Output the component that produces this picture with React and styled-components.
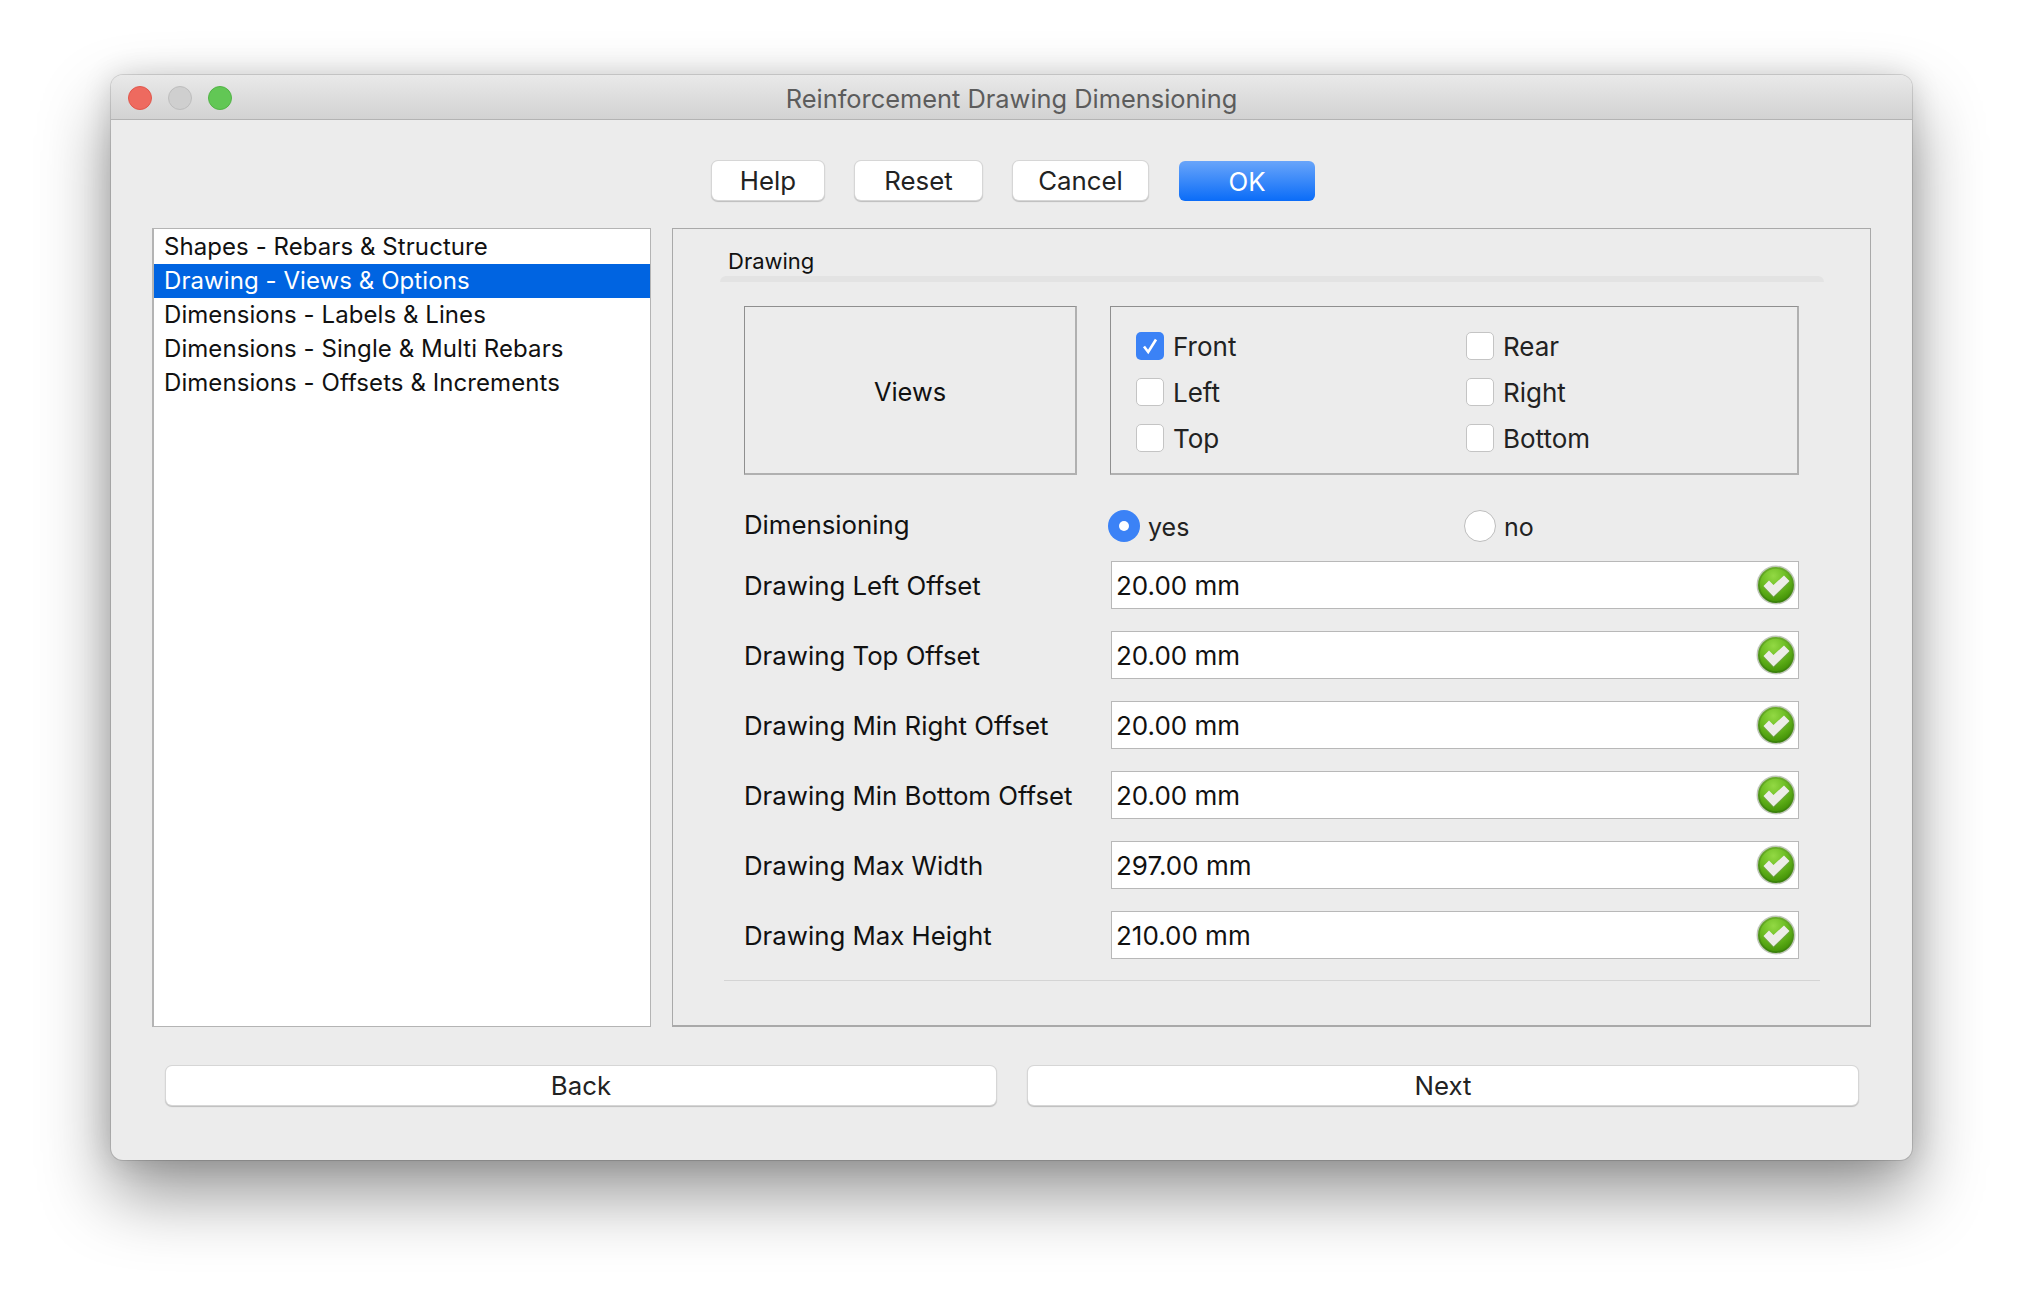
import React from 'react';
import styled, { createGlobalStyle } from 'styled-components';

const GlobalStyle = createGlobalStyle`
  html, body {
    margin: 0;
    background: #ffffff;
  }
  body {
    font-family: Inter, "Liberation Sans", sans-serif;
    color: #111111;
  }
`;

const CATEGORIES = [
  'Shapes - Rebars & Structure',
  'Drawing - Views & Options',
  'Dimensions - Labels & Lines',
  'Dimensions - Single & Multi Rebars',
  'Dimensions - Offsets & Increments',
];

const VIEWS = [
  { label: 'Front', checked: true },
  { label: 'Rear' },
  { label: 'Left' },
  { label: 'Right' },
  { label: 'Top' },
  { label: 'Bottom' },
];

const FIELDS = [
  { label: 'Drawing Left Offset', value: '20.00 mm' },
  { label: 'Drawing Top Offset', value: '20.00 mm' },
  { label: 'Drawing Min Right Offset', value: '20.00 mm' },
  { label: 'Drawing Min Bottom Offset', value: '20.00 mm' },
  { label: 'Drawing Max Width', value: '297.00 mm' },
  { label: 'Drawing Max Height', value: '210.00 mm' },
];

const ValidIcon = ({ id }) => (
  <svg width="40" height="40" viewBox="0 0 40 40">
    <defs>
      <linearGradient id={`ring-${id}`} x1="0" y1="0" x2="0" y2="1">
        <stop offset="0" stopColor="#6aad2a" />
        <stop offset="1" stopColor="#387f0a" />
      </linearGradient>
      <radialGradient id={`ball-${id}`} cx="0.42" cy="0.22" r="0.85">
        <stop offset="0" stopColor="#93d944" />
        <stop offset="0.5" stopColor="#69ba20" />
        <stop offset="1" stopColor="#3f8e04" />
      </radialGradient>
    </defs>
    <circle cx="20" cy="20" r="19.5" fill="#aab3a2" opacity="0.75" />
    <circle cx="20" cy="20" r="18" fill={`url(#ring-${id})`} />
    <circle cx="20" cy="20" r="16.2" fill={`url(#ball-${id})`} />
    <path d="M7.5 21 L13 15.5 L17.5 20 L28 10.5 L33.5 16 L17.5 31.5 Z" fill="#7f8f74" opacity="0.4" transform="translate(0 1.5)" />
    <path d="M7.5 21 L13 15.5 L17.5 20 L28 10.5 L33.5 16 L17.5 31.5 Z" fill="#ecece8" />
  </svg>
);

const App = () => {
  return (
    <>
      <GlobalStyle />
      <Page>
        <Window>
          <TitleBar>
            <Lights>
              <Light $color="#ee6a5f" $edge="#e0574c" />
              <Light $color="#cfcfcf" $edge="#bdbdbd" />
              <Light $color="#62c755" $edge="#52b346" />
            </Lights>
            <Title>Reinforcement Drawing Dimensioning</Title>
          </TitleBar>
          <Body>
            <TopButtons>
              <PushButton $width={112}>Help</PushButton>
              <PushButton $width={127}>Reset</PushButton>
              <PushButton $width={135}>Cancel</PushButton>
              <DefaultButton>OK</DefaultButton>
            </TopButtons>
            <Main>
              <CategoryList>
                {CATEGORIES.map((name, i) => (
                  <CategoryItem key={name} $selected={i === 1}>{name}</CategoryItem>
                ))}
              </CategoryList>
              <Panel>
                <GroupTitle>Drawing</GroupTitle>
                <Groove />
                <GroupBody>
                  <ViewsRow>
                    <FrameBox $center>Views</FrameBox>
                    <FrameBox>
                      <CheckGrid>
                        {VIEWS.map((view) => (
                          <CheckRow key={view.label}>
                            <CheckBox $checked={view.checked}>
                              {view.checked && (
                                <svg width="28" height="28" viewBox="0 0 28 28">
                                  <path d="M8 14.5 L12.2 20 L20 7.5" fill="none" stroke="#ffffff" strokeWidth="2.6" />
                                </svg>
                              )}
                            </CheckBox>
                            {view.label}
                          </CheckRow>
                        ))}
                      </CheckGrid>
                    </FrameBox>
                  </ViewsRow>
                  <RadioRow>
                    <RadioLabel>Dimensioning</RadioLabel>
                    <RadioGroup>
                      <RadioItem><Radio $on /><RadioText>yes</RadioText></RadioItem>
                      <RadioItem><Radio /><RadioText>no</RadioText></RadioItem>
                    </RadioGroup>
                  </RadioRow>
                  <Fields>
                    {FIELDS.map((field, i) => (
                      <FieldRow key={field.label}>
                        <FieldLabel>{field.label}</FieldLabel>
                        <FieldInput>
                          {field.value}
                          <ValidIcon id={i} />
                        </FieldInput>
                      </FieldRow>
                    ))}
                  </Fields>
                </GroupBody>
                <BottomLine />
              </Panel>
            </Main>
            <BottomButtons>
              <PushButton>Back</PushButton>
              <PushButton>Next</PushButton>
            </BottomButtons>
          </Body>
        </Window>
      </Page>
    </>
  );
};

const Page = styled.div`
  width: 2024px;
  height: 1308px;
  padding: 75px 0 0 111px;
  box-sizing: border-box;
  overflow: hidden;
`;
const Window = styled.div`
  width: 1801px;
  height: 1085px;
  background: #ececec;
  border-radius: 12px;
  box-shadow: 0 0 0 1px rgba(0, 0, 0, 0.12), 0 34px 70px rgba(0, 0, 0, 0.42), 0 0 30px rgba(0, 0, 0, 0.14);
  overflow: hidden;
`;
const TitleBar = styled.div`
  height: 45px;
  box-sizing: border-box;
  display: flex;
  align-items: center;
  position: relative;
  background: linear-gradient(#e9e9e9, #d2d2d2);
  border-bottom: 1px solid #b3b3b3;
`;
const Lights = styled.div`
  position: absolute;
  left: 17px;
  top: 11px;
  display: flex;
  gap: 16px;
`;
const Light = styled.span`
  width: 24px;
  height: 24px;
  border-radius: 50%;
  box-sizing: border-box;
  background: ${(p) => p.$color};
  border: 1px solid ${(p) => p.$edge};
`;
const Title = styled.div`
  flex: 1;
  text-align: center;
  font-size: 25.4px;
  color: #5c5c5c;
  padding-top: 2px;
`;
const Body = styled.div`
  display: flex;
  flex-direction: column;
`;
const TopButtons = styled.div`
  display: flex;
  justify-content: center;
  gap: 31px;
  padding: 41px 0 27px 4px;
`;
const PushButton = styled.div`
  flex: ${(p) => (p.$width ? `0 0 ${p.$width}px` : '1')};
  height: 39px;
  box-sizing: border-box;
  display: flex;
  align-items: center;
  justify-content: center;
  background: #ffffff;
  border-radius: 6px;
  box-shadow: 0 0 0 1px #d6d6d6, 0 1px 1px 1px rgba(0, 0, 0, 0.2);
  font-size: 25.8px;
  color: #222222;
`;
const DefaultButton = styled.div`
  width: 136px;
  height: 40px;
  display: flex;
  align-items: center;
  justify-content: center;
  border-radius: 6px;
  background: linear-gradient(#69a5fa, #0a6cf8);
  font-size: 25.8px;
  color: #ffffff;
`;
const Main = styled.div`
  display: flex;
  gap: 21px;
  padding: 0 43px 0 41px;
`;
const CategoryList = styled.div`
  flex: 0 0 499px;
  height: 799px;
  box-sizing: border-box;
  padding-top: 1px;
  background: #ffffff;
  border: 1px solid #b4b4b4;
  border-left-width: 2px;
  border-top-width: 1.5px;
`;
const CategoryItem = styled.div`
  height: 34px;
  line-height: 34px;
  padding-left: 10px;
  font-size: 24px;
  letter-spacing: 0.07px;
  background: ${(p) => (p.$selected ? '#0064e1' : 'transparent')};
  color: ${(p) => (p.$selected ? '#ffffff' : '#111111')};
`;
const Panel = styled.div`
  flex: 1;
  height: 799px;
  box-sizing: border-box;
  border: 1.5px solid #a9a9a9;
  border-bottom-width: 2px;
  padding: 17px 46px 0 47px;
`;
const GroupTitle = styled.div`
  padding-left: 8px;
  height: 30px;
  line-height: 30px;
  font-size: 22px;
`;
const Groove = styled.div`
  height: 6px;
  background: #e3e3e3;
  border-radius: 6px 6px 0 0;
`;
const GroupBody = styled.div`
  padding: 24px 25px 0 24px;
`;
const ViewsRow = styled.div`
  display: grid;
  grid-template-columns: 333px 689px;
  gap: 33px;
`;
const FrameBox = styled.div`
  height: 169px;
  box-sizing: border-box;
  border: 1px solid #8f8f8f;
  border-right: 2px solid #b0b0b0;
  border-bottom: 2px solid #b0b0b0;
  font-size: 25.4px;
  ${(p) => p.$center && 'display: flex; align-items: center; justify-content: center; padding-top: 2px;'}
`;
const CheckGrid = styled.div`
  display: grid;
  grid-template-columns: 330px 1fr;
  grid-auto-rows: 28px;
  row-gap: 18px;
  padding: 25px 0 0 25px;
`;
const CheckRow = styled.div`
  display: flex;
  align-items: center;
  gap: 9px;
  font-size: 26px;
  color: #222222;
`;
const CheckBox = styled.span`
  width: 28px;
  height: 28px;
  box-sizing: border-box;
  border-radius: 5px;
  display: block;
  background: ${(p) => (p.$checked ? '#3b82f6' : '#ffffff')};
  border: ${(p) => (p.$checked ? 'none' : '1px solid #c4c4c4')};
`;
const RadioRow = styled.div`
  display: grid;
  grid-template-columns: 364px 1fr;
  align-items: center;
  height: 32px;
  margin-top: 34px;
`;
const RadioGroup = styled.div`
  display: grid;
  grid-template-columns: 356px 1fr;
`;
const RadioItem = styled.div`
  display: flex;
  align-items: center;
  gap: 8px;
`;
const RadioText = styled.span`
  margin-top: 2px;
  font-size: 25px;
  color: #222222;
`;
const Radio = styled.span`
  width: 32px;
  height: 32px;
  box-sizing: border-box;
  border-radius: 50%;
  flex: none;
  display: flex;
  align-items: center;
  justify-content: center;
  background: ${(p) => (p.$on ? '#3b82f6' : '#ffffff')};
  border: ${(p) => (p.$on ? 'none' : '1px solid #bdbdbd')};
  &::after {
    content: '';
    display: ${(p) => (p.$on ? 'block' : 'none')};
    width: 10px;
    height: 10px;
    border-radius: 50%;
    background: #ffffff;
  }
`;
const Fields = styled.div`
  display: flex;
  flex-direction: column;
  gap: 22px;
  margin-top: 20px;
`;
const FieldRow = styled.div`
  display: grid;
  grid-template-columns: 367px 688px;
  align-items: center;
`;
const FieldLabel = styled.div`
  font-size: 25.8px;
  color: #111111;
`;
const RadioLabel = styled(FieldLabel)`
  padding-bottom: 2px;
`;
const FieldInput = styled.div`
  height: 48px;
  box-sizing: border-box;
  display: flex;
  align-items: center;
  justify-content: space-between;
  padding: 0 2px 0 4px;
  background: #ffffff;
  border: 1px solid #b8b8b8;
  font-size: 26px;
  color: #111111;
`;
const BottomLine = styled.div`
  height: 1px;
  margin: 21px 4px 0 4px;
  background: #d4d4d4;
`;
const BottomButtons = styled.div`
  display: flex;
  gap: 32px;
  padding: 39px 54px 0 55px;
`;

export default App;
